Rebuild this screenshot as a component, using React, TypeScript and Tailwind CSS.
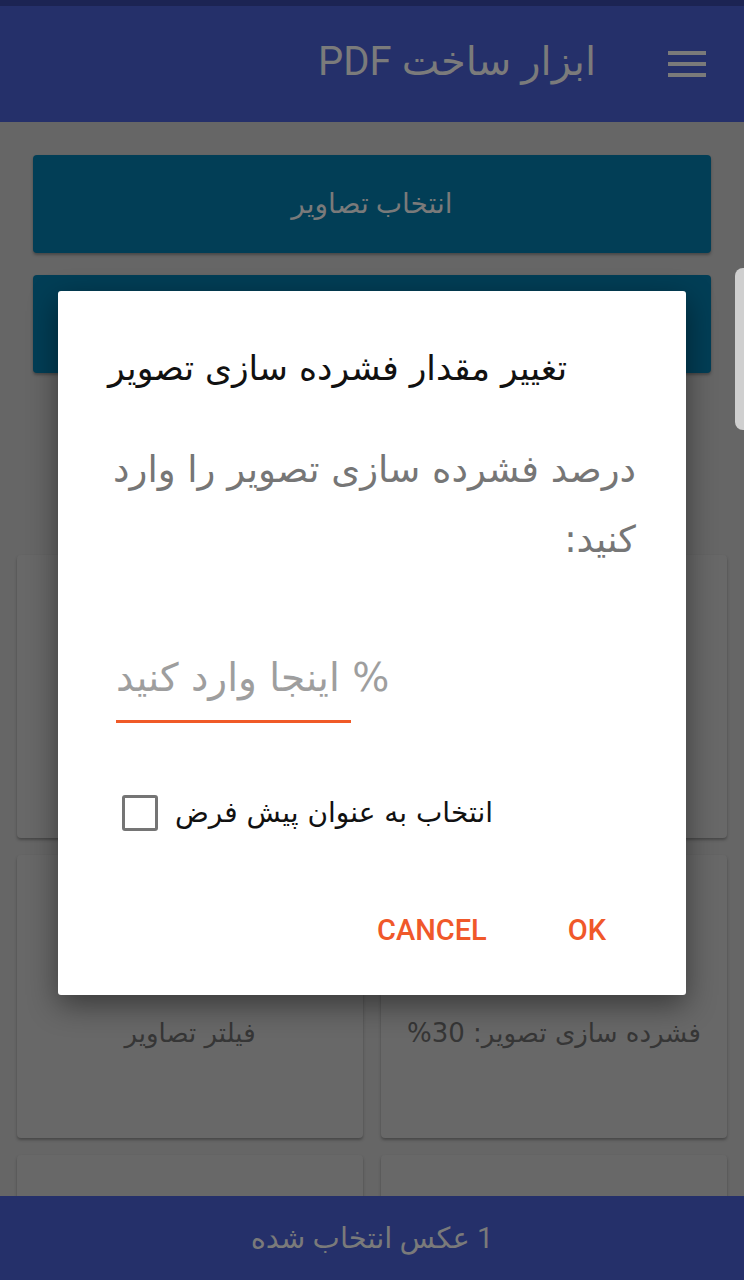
import React from "react";

const fa = { fontFamily: "Roboto, 'DejaVu Sans', sans-serif" };
const faD = { fontFamily: "'DejaVu Sans', sans-serif" };

function Card({ children }: { children?: React.ReactNode }) {
  return (
    <div className="h-[283px] rounded-[4px] bg-[#686868] shadow-[0_2px_3px_rgba(0,0,0,0.3)] flex flex-col items-center pt-[158px]">
      {children ? (
        <div dir="rtl" className="text-[26px] leading-[40px] text-[#363636] whitespace-nowrap" style={faD}>
          {children}
        </div>
      ) : null}
    </div>
  );
}

export default function App() {
  return (
    <div className="relative w-[744px] h-[1280px] overflow-hidden bg-[#666666] flex flex-col">
      <div className="h-[6px] bg-[#1c2453] shrink-0" />
      <div dir="rtl" className="h-[116px] shrink-0 bg-[#25306a] flex items-center pr-[38px] gap-[72px]">
        <svg width="38" height="28" viewBox="0 0 38 28" className="shrink-0">
          <rect x="0" y="1" width="38" height="4" fill="#7a7a7a" />
          <rect x="0" y="12" width="38" height="4" fill="#7a7a7a" />
          <rect x="0" y="23" width="38" height="4" fill="#7a7a7a" />
        </svg>
        <div className="text-[40px] leading-[48px] text-[#7b7b7b] pb-[4px]" style={fa}>
          ابزار ساخت PDF
        </div>
      </div>

      <div className="flex-1 overflow-hidden flex flex-col">
        <div className="px-[33px] pt-[33px] flex flex-col gap-[22px]">
          <div className="h-[98px] rounded-[4px] bg-[#023e56] shadow-[0_2px_3px_rgba(0,0,0,0.3)] flex items-center justify-center">
            <div dir="rtl" className="text-[28px] leading-[40px] text-[#7a7a7a]" style={fa}>انتخاب تصاویر</div>
          </div>
          <div className="h-[98px] rounded-[4px] bg-[#023e56] shadow-[0_2px_3px_rgba(0,0,0,0.3)]" />
        </div>
        <div className="mt-[33px] h-[2px] bg-[#111111]" />
        <div className="px-[17px] pt-[149px] grid grid-cols-2 gap-x-[18px] gap-y-[17px]">
          <Card />
          <Card>ریسایز تصاویر: اصلی</Card>
          <Card>فیلتر تصاویر</Card>
          <Card>
            فشرده سازی تصویر: <span dir="ltr">%30</span>
          </Card>
          <Card />
          <Card />
        </div>
      </div>

      <div className="h-[84px] shrink-0 bg-[#25306a] flex items-center justify-center">
        <div dir="rtl" className="text-[29px] leading-[40px] text-[#7a7a7a]" style={fa}>1 عکس انتخاب شده</div>
      </div>

      <div className="absolute left-[735px] top-[268px] w-[12px] h-[162px] rounded-l-[8px] bg-[#cfcfcf]" />

      <div className="absolute left-[58px] top-[291px] w-[628px] h-[704px] bg-white rounded-[3px] shadow-[0_10px_30px_rgba(0,0,0,0.45)] flex flex-col">
        <div className="pl-[50px] pt-[55px] flex">
          <div dir="rtl" className="text-[34.5px] leading-[44px] text-[#111111] whitespace-nowrap" style={faD}>
            تغییر مقدار فشرده سازی تصویر
          </div>
        </div>
        <div dir="rtl" className="pl-[30px] pr-[50px] pt-[45px] text-[37px] leading-[70px] text-[#767676] text-right whitespace-nowrap" style={faD}>
          درصد فشرده سازی تصویر را وارد
          <br />
          کنید:
        </div>
        <div className="pl-[58px] pt-[78px] flex flex-col">
          <div dir="rtl" className="text-[39px] leading-[50px] text-[#9e9e9e] text-left w-max" style={faD}>
            % اینجا وارد کنید
          </div>
          <div className="mt-[17px] w-[235px] h-[3px] bg-[#f05a28]" />
        </div>
        <div className="pl-[64px] pt-[70px] flex items-center gap-[17px]">
          <div className="w-[36px] h-[36px] rounded-[3px] border-[3px] border-[#757575] shrink-0" />
          <div dir="rtl" className="text-[28px] leading-[40px] text-[#111111]" style={faD}>
            انتخاب به عنوان پیش فرض
          </div>
        </div>
        <div className="flex justify-end items-center pr-[80px] pt-[77px] gap-[81px]">
          <div className="text-[29px] leading-[40px] font-medium text-[#f0582a]" style={{ fontFamily: "Roboto, sans-serif" }}>CANCEL</div>
          <div className="text-[29px] leading-[40px] font-medium text-[#f0582a]" style={{ fontFamily: "Roboto, sans-serif" }}>OK</div>
        </div>
      </div>
    </div>
  );
}
